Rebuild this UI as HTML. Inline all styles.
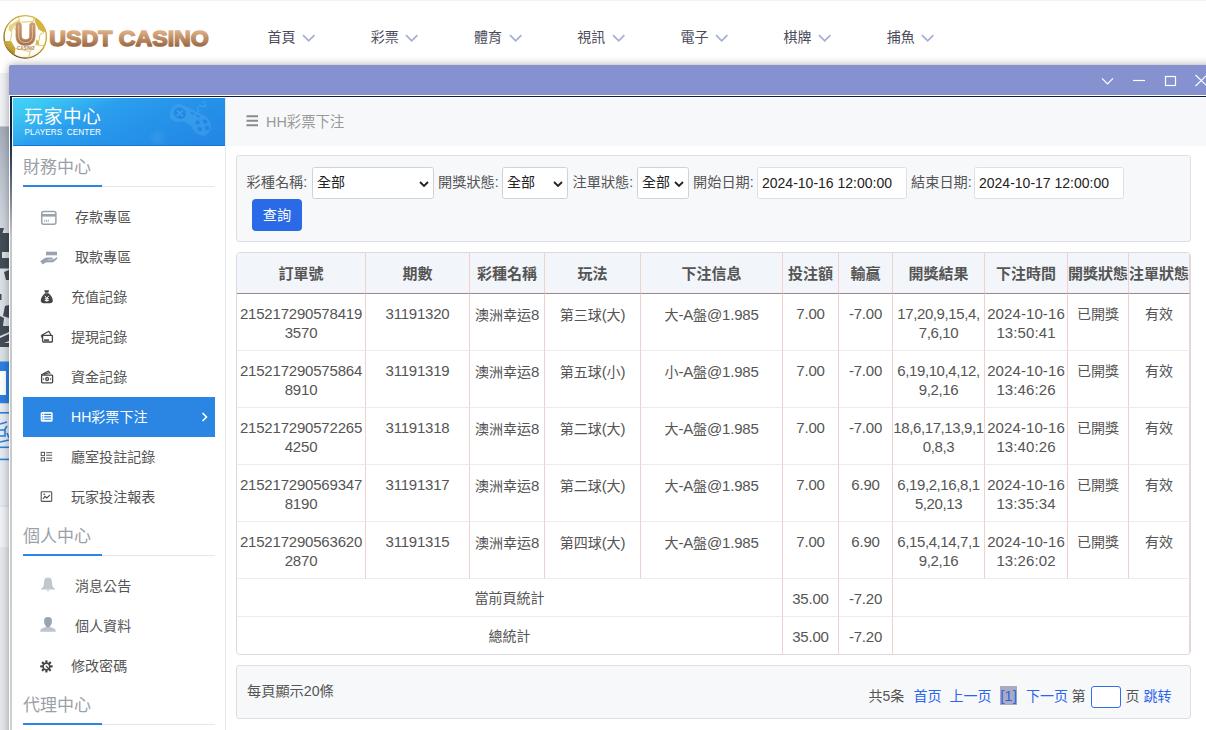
<!DOCTYPE html>
<html lang="zh-Hant">
<head>
<meta charset="utf-8">
<title>HH彩票下注</title>
<style>
*{box-sizing:border-box;margin:0;padding:0}
html,body{width:1206px;height:730px;overflow:hidden;background:#fff}
body{position:relative;font-family:"Liberation Sans","Noto Sans CJK TC",sans-serif;color:#555;font-size:14.6px}
.abs{position:absolute}
/* page behind */
#pagebg{left:0;top:73px;width:20px;height:657px;background:#e6e8ec;overflow:hidden}
#topline{left:0;top:0;width:1206px;height:1px;background:#f2f2f2}
#nav{left:0;top:2px;width:1206px;height:70px;background:#fff}
.mi{position:absolute;top:28px;margin-left:-.7px;font-size:14px;color:#4b4b5c;white-space:nowrap;line-height:18px}
.mi svg{position:absolute;left:34.500px;top:6px}
#logotxt{left:49px;top:22px;font-family:"Liberation Sans",sans-serif;font-weight:bold;font-size:24.2px;line-height:30px;white-space:nowrap;background:linear-gradient(#dcab80 20%,#9a6a44 85%);-webkit-background-clip:text;background-clip:text;color:transparent;-webkit-text-stroke:1.1px transparent;letter-spacing:-.4px;transform-origin:0 0}
/* modal */
#modal{left:9px;top:65px;width:1210px;height:680px;background:#8691d0;border-radius:2px 0 0 0;box-shadow:0 0 8px rgba(0,0,0,.35)}
#frame{left:9px;top:95px;width:1210px;height:650px;background:#fff}
#frame2{left:10px;top:96px;width:1210px;height:650px;background:#fff;border-top:1px solid #0b1c3e}
#lb{left:10px;top:96px;width:2px;height:640px;background:linear-gradient(#0b1c3e 0,#0b1c3e 40px,#777f8c 100px,#c4c6ca 140px,#cfd0d3 640px)}
#side{left:12px;top:97px;width:213px;height:633px;background:#fff}
#sidehead{left:13px;top:98px;width:212px;height:48px;border-bottom:1px solid #1274e0;background:linear-gradient(155deg,#42d2f6 0,#3dc8f4 12%,#2b9fee 36%,#2693e9 60%,#2285e4 100%);overflow:hidden}
#sidehead .t1{position:absolute;left:11.300px;top:8px;font-size:18.600px;letter-spacing:.75px;line-height:22px;color:#fff;white-space:nowrap}
#sidehead .t2{position:absolute;left:11.500px;top:30px;font-size:8.2px;line-height:10px;color:#fff;white-space:nowrap;letter-spacing:.1px;word-spacing:2px}
#vline{left:225px;top:97px;width:1px;height:633px;background:#e6e9ee}
.sec{position:absolute;left:23px;width:192px;height:31px;border-bottom:1px solid #e3e6ea;font-size:17px;line-height:23px;color:#9b9fa8;white-space:nowrap}
.sec i{position:absolute;left:0;bottom:-1px;width:79px;height:2px;background:#2a86e0}
.it{position:absolute;left:23px;width:192px;height:40px;font-size:14.050px;line-height:40px;color:#555;white-space:nowrap}
.it span{position:absolute;left:48px;top:0}
.it.w span{left:52px}
.it svg{position:absolute}
.it.act{background:#2a86e2;color:#fff}
/* main */
#crumb{left:226px;top:98px;width:980px;height:48px;background:#f7f8fa}
#crumb .t{position:absolute;left:40px;top:14px;font-size:14.4px;line-height:20px;color:#999;white-space:nowrap}
.box{position:absolute;left:236px;width:955px;background:#f7f8fa;border:1px solid #dcdfe3;border-radius:3px}
.lbl{position:absolute;top:173px;font-size:14.2px;line-height:18px;color:#555;white-space:nowrap}
.sel,.inp{position:absolute;top:167px;height:32px;background:#fff;border:1px solid #cfd3d8;border-radius:2.500px;font-size:14px;line-height:29px;color:#222;white-space:nowrap;padding-left:4px}
.inp{line-height:31px !important;border-color:#dde0e4 !important}
.sel svg{position:absolute;right:4px;top:12.500px}
#btn{left:252px;top:199px;width:50px;height:32px;background:#2a6ae6;border-radius:4px;color:#fff;font-size:14.2px;line-height:32px;text-align:center}
/* table */
#tblwrap{left:236px;top:252px;width:955px;height:403px;border:1px solid #d9dcdf;border-radius:4px;background:#fff;overflow:hidden}
table{border-collapse:separate;border-spacing:0;table-layout:fixed;width:953px;position:absolute;left:0;top:0}
th{height:41px;background:#f2f5f9;font-size:15px;font-weight:bold;color:#555;border-bottom:1px solid #958c8c;border-right:1px solid #f3d0d0;white-space:nowrap;overflow:visible;text-align:center;vertical-align:middle;padding:0 0 2px}
td{height:57px;border-bottom:1px solid #ececec;border-right:1px solid #f3d0d0;text-align:center;vertical-align:top;padding:10px 0 0;font-size:15px;letter-spacing:-.2px;line-height:19px;color:#555;white-space:nowrap;overflow:hidden}
tr.sum td{height:38px;padding:10px 0 0;vertical-align:top}

td.c{font-size:14px;letter-spacing:0;padding-top:10.500px}
td.c b{font-weight:normal;font-size:15px;letter-spacing:-.2px}
td.d{letter-spacing:.1px}
td.r{letter-spacing:-.4px}
.pr{top:687px;font-size:14px;line-height:18px;white-space:nowrap;color:#555}
.pr.b{color:#2d64ec}
#pager{left:236px;top:665px;width:955px;height:54px}
#pager .l{position:absolute;left:10px;top:16px;font-size:14.2px;line-height:18px;color:#555;white-space:nowrap}
#pager .r{position:absolute;top:20px;font-size:14.2px;line-height:18px;white-space:nowrap;color:#555}
#pager .r.b{color:#2a5fd8}
</style>
</head>
<body>
<div class="abs" id="pagebg"><svg style="position:absolute;left:0;top:0" width="20" height="657" viewBox="0 73 20 657">
<defs><linearGradient id="gs1" x1="0" y1="0" x2="0" y2="1"><stop offset="0" stop-color="#a3adb9"/><stop offset="0.5" stop-color="#bcc4ce"/><stop offset="1" stop-color="#d3d8df"/></linearGradient></defs>
<rect x="0" y="73" width="20" height="53.500" fill="#f0f1f5"/>
<rect x="0" y="126.500" width="20" height="104" fill="url(#gs1)"/>
<rect x="0" y="230" width="20" height="132" fill="#dbe0e6"/>
<g fill="#434d59">
<path d="M0 228 L4 228 L2.500 233 L9 233 L9 252 L2 252 L2 258 L9 258 L9 268.500 L0 268.500 Z"/>
<path d="M9 270 L9 280 L6 280 L4 272 Z"/>
<path d="M0 294 L1.500 294 L1.500 300 L0 300 Z"/>
<path d="M9 305 L9 318 L3 316 L5 306 Z"/>
<path d="M0 316 L4 318 L3 326 L9 326 L9 332 L0 336 Z"/>
<path d="M0 338 L9 334 L9 341 L4 343 L9 343 L9 347 L0 347 Z"/>
</g>
<rect x="0" y="361.500" width="20" height="42" fill="#2b80df"/>
<rect x="0" y="371" width="6" height="24" fill="#fff"/>
<rect x="0" y="403.500" width="20" height="103" fill="#e6eaf1"/>
<rect x="0" y="412" width="20" height="1.600" fill="#2b80df"/>
<g fill="none" stroke="#2b80df" stroke-width="1.600"><path d="M0 424 L7 422 M0 430 L5 430 L5 436 L0 436 M7 426 L4 431 M7 433 L9 438 M0 442 L9 440"/></g>
<rect x="0" y="446.500" width="20" height="1.600" fill="#2b80df"/>
<rect x="0" y="458.600" width="20" height="1.600" fill="#2b80df"/>
<rect x="0" y="506" width="20" height="41" fill="#eff1f5"/>
<rect x="0" y="505.500" width="20" height="1" fill="#d5d8de"/>
<rect x="0" y="547" width="20" height="183" fill="#e5e6ea"/>
</svg></div>
<div class="abs" id="nav"></div>
<div class="abs" id="topline"></div>
<svg class="abs" style="left:0;top:10px" width="60" height="54" viewBox="0 0 60 54">
<defs>
<radialGradient id="gball" cx="0.5" cy="0.45" r="0.6"><stop offset="0" stop-color="#ffffff"/><stop offset="0.78" stop-color="#fffef8"/><stop offset="1" stop-color="#f3e6b0"/></radialGradient>
<linearGradient id="gold" x1="0.8" y1="0" x2="0.2" y2="1"><stop offset="0" stop-color="#d6b94e"/><stop offset="0.5" stop-color="#bf9c32"/><stop offset="1" stop-color="#5a4106"/></linearGradient>
<linearGradient id="gu" x1="0" y1="0" x2="0" y2="1"><stop offset="0" stop-color="#d09e74"/><stop offset="1" stop-color="#a5724a"/></linearGradient>
<clipPath id="cb"><circle cx="25.200" cy="26.900" r="21.600"/></clipPath>
</defs>
<circle cx="25.200" cy="26.900" r="21.200" fill="url(#gball)" stroke="url(#gold)" stroke-width="1.300"/>
<g clip-path="url(#cb)">
<path d="M34.400 7.500 L41.500 10.500 L47 19 L44 22.500 L38.500 19.500 L34.800 11.200 Z" fill="#d4b544"/>
<path d="M9 15.500 L18.500 9.800 L21.500 12.200 L13.300 17 L11.800 22.500 L8.500 20 Z" fill="#e3cc6c" opacity=".85"/>
<path d="M3.500 31 L11.100 31 L15.500 38.500 L14.400 45.500 L8.100 42 Z" fill="url(#gold)"/>
<path d="M36.300 29.600 L38.800 31.100 L39.500 35.800 L35.500 35 Z" fill="#d9bd52"/>
<g fill="none" stroke="#dcc25e" stroke-width=".9">
<path d="M18.500 7 L19.500 10.500 M34.400 7.500 L33 11.500 M21.500 12.200 L33 11.500 M11.800 22.500 L10.500 31 M44 22.500 L40 24.500 L38.800 31.100 M39.500 35.800 L45 35 M15.500 38.500 L30 41.500 L35.500 35 M30 41.500 L28.500 48 M13.300 17 L16 20"/>
</g>
</g>
<path d="M18.700 12.600 Q15.900 12.600 15.900 15.400 L15.900 26 Q15.900 35.500 25.500 35.500 Q35.200 35.500 35.200 26 L35.200 15.400 Q35.200 12.600 32.400 12.600 Q29.600 12.600 29.600 15.400 L29.600 26 Q29.600 29.600 25.500 29.600 Q21.500 29.600 21.500 26 L21.500 15.400 Q21.500 12.600 18.700 12.600 Z" fill="url(#gu)" stroke="url(#gu)" stroke-width=".5"/>
<path d="M18.700 15.500 L18.700 26 Q18.700 32.600 25.500 32.600 Q32.400 32.600 32.400 26 L32.400 15.500" fill="none" stroke="#f1dfcd" stroke-width=".7" stroke-linecap="round" opacity=".9"/>
<text x="25.700" y="40.400" font-family="Liberation Sans, sans-serif" font-size="4.600" font-weight="bold" fill="#b3855c" text-anchor="middle" textLength="17.500" lengthAdjust="spacingAndGlyphs">CASINO</text>
</svg>
<svg class="abs" style="left:44px;top:22px" width="175" height="32" viewBox="0 0 175 32"><defs><linearGradient id="glt" x1="0" y1="0" x2="0" y2="1"><stop offset="0.22" stop-color="#ddae84"/><stop offset="0.8" stop-color="#9d6c46"/></linearGradient></defs><text x="5.300" y="23.700" font-family="Liberation Sans, sans-serif" font-weight="bold" font-size="22.400" fill="url(#glt)" stroke="url(#glt)" stroke-width="1.500" stroke-linejoin="round" textLength="159.500" lengthAdjust="spacingAndGlyphs">USDT CASINO</text></svg>
<div class="mi" style="left:268.3px">首頁<svg width="14" height="9" viewBox="0 0 14 9"><path d="M1 1.200 L6.700 6.900 L12.400 1.200" fill="none" stroke="#a3aed6" stroke-width="1.700"/></svg></div>
<div class="mi" style="left:371.5px">彩票<svg width="14" height="9" viewBox="0 0 14 9"><path d="M1 1.200 L6.700 6.900 L12.400 1.200" fill="none" stroke="#a3aed6" stroke-width="1.700"/></svg></div>
<div class="mi" style="left:474.7px">體育<svg width="14" height="9" viewBox="0 0 14 9"><path d="M1 1.200 L6.700 6.900 L12.400 1.200" fill="none" stroke="#a3aed6" stroke-width="1.700"/></svg></div>
<div class="mi" style="left:577.9px">視訊<svg width="14" height="9" viewBox="0 0 14 9"><path d="M1 1.200 L6.700 6.900 L12.400 1.200" fill="none" stroke="#a3aed6" stroke-width="1.700"/></svg></div>
<div class="mi" style="left:681.1px">電子<svg width="14" height="9" viewBox="0 0 14 9"><path d="M1 1.200 L6.700 6.900 L12.400 1.200" fill="none" stroke="#a3aed6" stroke-width="1.700"/></svg></div>
<div class="mi" style="left:784.3px">棋牌<svg width="14" height="9" viewBox="0 0 14 9"><path d="M1 1.200 L6.700 6.900 L12.400 1.200" fill="none" stroke="#a3aed6" stroke-width="1.700"/></svg></div>
<div class="mi" style="left:887.5px">捕魚<svg width="14" height="9" viewBox="0 0 14 9"><path d="M1 1.200 L6.700 6.900 L12.400 1.200" fill="none" stroke="#a3aed6" stroke-width="1.700"/></svg></div>

<div class="abs" id="modal"></div>
<svg class="abs" style="left:1096px;top:70px" width="110" height="22" viewBox="0 0 110 22">
<g fill="none" stroke="#fff" stroke-width="1.200">
<path d="M6 8.300 L11.500 13.800 L17 8.300"/>
<path d="M37 10.500 L49 10.500"/>
<rect x="69.500" y="6.500" width="10" height="9"/>
<path d="M99.500 5 L111 16 M99.500 16 L111 5"/>
</g></svg>
<div class="abs" id="frame"></div><div class="abs" id="frame2"></div><div class="abs" id="lb"></div>
<div class="abs" id="side"></div>
<div class="abs" id="sidehead"><svg style="position:absolute;left:0;top:0" width="212" height="48" viewBox="0 0 212 48">
<g transform="translate(176.500 21.500) rotate(26) scale(1 .9)" opacity=".6">
<path d="M-21 -2 Q-21 -11.500 -10 -11.500 L10 -11 Q23 -10.500 23 2 Q23 11 15 10.500 Q9 10 5 6 L-5 5 Q-9 9 -14 9 Q-21 9 -21 -2 Z" fill="#49a9ee" opacity=".75"/>
<circle cx="-11.500" cy="-1.500" r="6.200" fill="#2283e2"/>
<path d="M-11.500 -6 L-11.500 3 M-16 -1.500 L-7 -1.500" stroke="#49a3ec" stroke-width="2" transform="rotate(20 -11.500 -1.500)"/>
<rect x="-2" y="-8.500" width="4" height="1.800" fill="#2283e2"/><rect x="4" y="-8.500" width="4" height="1.800" fill="#2283e2"/>
<circle cx="8.500" cy="-1" r="2.300" fill="#2283e2"/><circle cx="15" cy="-5.500" r="2.300" fill="#2283e2"/>
<circle cx="13.500" cy="4.500" r="2.300" fill="#2283e2"/><circle cx="19.500" cy="0" r="2.300" fill="#2283e2"/>
</g>
<path d="M186 14 Q183 9 187 7.500 Q190 9.500 193 8 Q192 5 190 3" fill="none" stroke="#49a9ee" stroke-width="1" opacity=".8"/>
<circle cx="144.500" cy="40" r="8" fill="#3a9cec" opacity=".35"/><circle cx="144.500" cy="40" r="4.500" fill="#3a9cec" opacity=".4"/>
</svg><div class="t1">玩家中心</div><div class="t2">PLAYERS CENTER</div></div>
<div class="abs" id="vline"></div>
<div class="sec" style="top:156px">財務中心<i></i></div>
<div class="it w" style="top:197px"><svg style="left:17px;top:13px" width="18" height="16" viewBox="0 0 18 16"><rect x="1.700" y="1.500" width="14.200" height="12.700" rx="2" fill="none" stroke="#98a2ac" stroke-width="1.500"/><rect x="1.700" y="4" width="14.200" height="2.600" fill="#98a2ac"/><path d="M4.700 9.800v2M6.500 9.800v2M8.300 9.800v2" stroke="#98a2ac" stroke-width=".9"/></svg><span>存款專區</span></div>
<div class="it w" style="top:237px"><svg style="left:16px;top:13px" width="20" height="16" viewBox="0 0 20 16"><rect x="7" y="1.700" width="11" height="3.600" fill="#9aa3ad"/><path d="M1.200 11.200 L3.800 14.500 L6.600 12.500 L14 12.200 Q16 11.500 18.300 8.600 Q18.800 7 17.600 7.200 L15.200 9 L12.800 9.600 Q14.200 9 13.800 8 Q13.500 7.600 12 7.600 L7.600 7.600 Q6 7.800 4.800 8.800 Z" fill="#9aa3ad"/><path d="M8.500 9.900 L13.400 9.700" stroke="#fff" stroke-width=".6" opacity=".8"/></svg><span>取款專區</span></div>
<div class="it" style="top:277px"><svg style="left:16px;top:12px" width="16" height="16" viewBox="0 0 16 16"><path d="M5.200 1.200 L10.200 1.200 L9.200 3.800 L6.200 3.800 Z" fill="#444"/><path d="M6 4.300 L9.600 4.300 Q13.800 8 13.800 11.500 Q13.800 14.300 10.800 14.300 L4.800 14.300 Q1.800 14.300 1.800 11.500 Q1.800 8 6 4.300 Z" fill="#444"/><path d="M5.800 6.800 L7.800 9.400 L9.800 6.800 M7.800 9.400 L7.800 12.800 M5.800 9.800 L9.800 9.800 M5.800 11.400 L9.800 11.400" stroke="#fff" stroke-width="1" fill="none"/></svg><span>充值記錄</span></div>
<div class="it" style="top:317px"><svg style="left:16px;top:12px" width="16" height="16" viewBox="0 0 16 16"><path d="M2.200 6.500 L9.800 2.300 L12 6" fill="none" stroke="#444" stroke-width="1.200" stroke-linejoin="round"/><rect x="3.600" y="6.300" width="9.800" height="6.700" rx=".8" fill="#fff" stroke="#444" stroke-width="1.300"/><path d="M2.200 6.500 L3.600 9.500" stroke="#444" stroke-width="1.200"/><rect x="5" y="10.300" width="5" height="1.600" fill="#444"/></svg><span>提現記錄</span></div>
<div class="it" style="top:357px"><svg style="left:16px;top:12px" width="16" height="16" viewBox="0 0 16 16"><path d="M2 6 L9.500 2 L11.300 4.800 M5 5.600 L10.800 3.400" fill="none" stroke="#444" stroke-width="1.100" stroke-linejoin="round"/><rect x="2.600" y="6.200" width="11" height="7.600" rx=".8" fill="#fff" stroke="#444" stroke-width="1.300"/><ellipse cx="8.100" cy="10" rx="2" ry="2.300" fill="#444"/><path d="M8.100 8.800v2.400" stroke="#fff" stroke-width=".8"/><circle cx="4.600" cy="10" r=".7" fill="#444"/><circle cx="11.600" cy="10" r=".7" fill="#444"/></svg><span>資金記錄</span></div>
<div class="it act" style="top:397px"><svg style="left:17px;top:14px" width="14" height="12" viewBox="0 0 14 12"><rect x=".7" y="1" width="12" height="9.700" rx="1.600" fill="#fff"/><path d="M4.200 3.400h7M4.200 5.850h7M4.200 8.300h7" stroke="#2a86e2" stroke-width="1.100"/><path d="M2.200 3.400h1M2.200 5.850h1M2.200 8.300h1" stroke="#2a86e2" stroke-width="1.100"/></svg><span>HH彩票下注</span><svg style="left:178px;top:14px" width="8" height="12" viewBox="0 0 8 12"><path d="M1.500 2 L5.500 6 L1.500 10" fill="none" stroke="#fff" stroke-width="1.600"/></svg></div>
<div class="it" style="top:437px"><svg style="left:17px;top:14px" width="14" height="12" viewBox="0 0 14 12"><rect x="1.200" y="1.300" width="3.300" height="3.300" fill="none" stroke="#555" stroke-width="1"/><rect x="1.200" y="6.700" width="3.300" height="3.300" fill="none" stroke="#555" stroke-width="1"/><path d="M6.200 1.700h6M6.200 4.200h6M6.200 7.100h6M6.200 9.600h6" stroke="#555" stroke-width="1"/></svg><span>廳室投註記錄</span></div>
<div class="it" style="top:477px"><svg style="left:17px;top:14px" width="14" height="12" viewBox="0 0 14 12"><rect x="1.200" y=".8" width="10.500" height="9.600" rx=".6" fill="none" stroke="#555" stroke-width="1.100"/><path d="M3 8 L5 5.400 L6.800 7 L9.800 4.200" fill="none" stroke="#444" stroke-width="1.100"/><circle cx="4.200" cy="3.300" r=".8" fill="#444"/></svg><span>玩家投注報表</span></div>
<div class="sec" style="top:525px">個人中心<i></i></div>
<div class="it w" style="top:566px"><svg style="left:16px;top:10px" width="18" height="18" viewBox="0 0 18 18"><path d="M9 1.600 Q12.800 1.600 13 6 L13.300 9.500 Q13.600 11.500 16 12.800 L16 13.400 L2 13.400 L2 12.800 Q4.400 11.500 4.700 9.500 L5 6 Q5.200 1.600 9 1.600 Z" fill="#c1c7cd"/><path d="M7.400 14.300 L10.600 14.300 L9 15.800 Z" fill="#c1c7cd"/></svg><span>消息公告</span></div>
<div class="it w" style="top:606px"><svg style="left:16px;top:10px" width="18" height="18" viewBox="0 0 18 18"><path d="M1.200 15.800 Q1.200 12.800 4 12 L7.500 10.800 L10.500 10.800 L14 12 Q16.800 12.800 16.800 15.800 Z" fill="#bdc4cb"/><path d="M9 1 Q13 1 13 5 Q13 8 11.200 10 Q10.500 11.300 9 11.300 Q7.500 11.300 6.800 10 Q5 8 5 5 Q5 1 9 1 Z" fill="#9aa4ae"/></svg><span>個人資料</span></div>
<div class="it" style="top:646px"><svg style="left:16px;top:12px" width="16" height="16" viewBox="0 0 16 16"><g transform="translate(7.400 8.400)"><g fill="#444"><rect x="-1.100" y="-6.200" width="2.200" height="3" rx=".5"/><rect x="-1.100" y="-6.200" width="2.200" height="3" rx=".5" transform="rotate(45)"/><rect x="-1.100" y="-6.200" width="2.200" height="3" rx=".5" transform="rotate(90)"/><rect x="-1.100" y="-6.200" width="2.200" height="3" rx=".5" transform="rotate(135)"/><rect x="-1.100" y="-6.200" width="2.200" height="3" rx=".5" transform="rotate(180)"/><rect x="-1.100" y="-6.200" width="2.200" height="3" rx=".5" transform="rotate(225)"/><rect x="-1.100" y="-6.200" width="2.200" height="3" rx=".5" transform="rotate(270)"/><rect x="-1.100" y="-6.200" width="2.200" height="3" rx=".5" transform="rotate(315)"/></g><circle r="4" fill="#444"/><circle r="2.500" fill="#fff"/><path d="M-.5 -.5 L2.600 2.600" stroke="#444" stroke-width="1.200"/></g></svg><span>修改密碼</span></div>
<div class="sec" style="top:694px">代理中心<i></i></div>

<div class="abs" id="crumb"><svg style="position:absolute;left:20px;top:17px" width="13" height="12" viewBox="0 0 13 12"><path d="M.5 1.200h11.500M.5 5.700h11.500M.5 10.200h11.500" stroke="#8a8a8a" stroke-width="2"/></svg><div class="t">HH彩票下注</div></div>
<div class="box" style="top:155px;height:87px"></div>
<div class="lbl" style="left:246.500px">彩種名稱:</div>
<div class="sel" style="left:312px;width:122px">全部<svg width="10" height="6" viewBox="0 0 10 6"><path d="M1 1 L5 5 L9 1" fill="none" stroke="#222" stroke-width="1.800"/></svg></div>
<div class="lbl" style="left:438px">開獎狀態:</div>
<div class="sel" style="left:502px;width:66px">全部<svg width="10" height="6" viewBox="0 0 10 6"><path d="M1 1 L5 5 L9 1" fill="none" stroke="#222" stroke-width="1.800"/></svg></div>
<div class="lbl" style="left:572.500px">注單狀態:</div>
<div class="sel" style="left:637px;width:52px">全部<svg width="10" height="6" viewBox="0 0 10 6"><path d="M1 1 L5 5 L9 1" fill="none" stroke="#222" stroke-width="1.800"/></svg></div>
<div class="lbl" style="left:693px">開始日期:</div>
<div class="inp" style="left:757px;width:150px">2024-10-16 12:00:00</div>
<div class="lbl" style="left:911px">結束日期:</div>
<div class="inp" style="left:974px;width:150px">2024-10-17 12:00:00</div>
<div class="abs" id="btn">查詢</div>

<div class="abs" id="tblwrap"><table><colgroup><col style="width:129px"><col style="width:104px"><col style="width:75px"><col style="width:96px"><col style="width:142px"><col style="width:56px"><col style="width:54px"><col style="width:92px"><col style="width:83px"><col style="width:61px"><col style="width:61px"></colgroup>
<tr><th>訂單號</th><th>期數</th><th>彩種名稱</th><th>玩法</th><th>下注信息</th><th>投注額</th><th>輸贏</th><th>開獎結果</th><th>下注時間</th><th>開獎狀態</th><th>注單狀態</th></tr>
<tr><td class="n">215217290578419<br>3570</td><td class="n">31191320</td><td class="c">澳洲幸运<b>8</b></td><td class="c">第三球<b>(</b>大<b>)</b></td><td class="c">大<b>-A</b>盤<b>@1.985</b></td><td class="n">7.00</td><td class="n">-7.00</td><td class="n r">17,20,9,15,4,<br>7,6,10</td><td class="n d">2024-10-16<br>13:50:41</td><td class="c">已開獎</td><td class="c">有效</td></tr>
<tr><td class="n">215217290575864<br>8910</td><td class="n">31191319</td><td class="c">澳洲幸运<b>8</b></td><td class="c">第五球<b>(</b>小<b>)</b></td><td class="c">小<b>-A</b>盤<b>@1.985</b></td><td class="n">7.00</td><td class="n">-7.00</td><td class="n r">6,19,10,4,12,<br>9,2,16</td><td class="n d">2024-10-16<br>13:46:26</td><td class="c">已開獎</td><td class="c">有效</td></tr>
<tr><td class="n">215217290572265<br>4250</td><td class="n">31191318</td><td class="c">澳洲幸运<b>8</b></td><td class="c">第二球<b>(</b>大<b>)</b></td><td class="c">大<b>-A</b>盤<b>@1.985</b></td><td class="n">7.00</td><td class="n">-7.00</td><td class="n r">18,6,17,13,9,1<br>0,8,3</td><td class="n d">2024-10-16<br>13:40:26</td><td class="c">已開獎</td><td class="c">有效</td></tr>
<tr><td class="n">215217290569347<br>8190</td><td class="n">31191317</td><td class="c">澳洲幸运<b>8</b></td><td class="c">第二球<b>(</b>大<b>)</b></td><td class="c">大<b>-A</b>盤<b>@1.985</b></td><td class="n">7.00</td><td class="n">6.90</td><td class="n r">6,19,2,16,8,1<br>5,20,13</td><td class="n d">2024-10-16<br>13:35:34</td><td class="c">已開獎</td><td class="c">有效</td></tr>
<tr><td class="n">215217290563620<br>2870</td><td class="n">31191315</td><td class="c">澳洲幸运<b>8</b></td><td class="c">第四球<b>(</b>大<b>)</b></td><td class="c">大<b>-A</b>盤<b>@1.985</b></td><td class="n">7.00</td><td class="n">6.90</td><td class="n r">6,15,4,14,7,1<br>9,2,16</td><td class="n d">2024-10-16<br>13:26:02</td><td class="c">已開獎</td><td class="c">有效</td></tr>
<tr class="sum"><td colspan="5" class="c">當前頁統計</td><td class="n">35.00</td><td class="n">-7.20</td><td colspan="4"></td></tr>
<tr class="sum"><td colspan="5" class="c">總統計</td><td class="n">35.00</td><td class="n">-7.20</td><td colspan="4"></td></tr>
</table></div>

<div class="box" id="pager" style="top:665px;height:54px"><div class="l">每頁顯示20條</div></div>
<div class="abs pr" style="left:868.5px">共5条</div>
<div class="abs pr b" style="left:913.5px">首页</div>
<div class="abs pr b" style="left:949.5px">上一页</div>
<div class="abs pr b" style="left:1000px;top:686px;width:17px;height:19px;line-height:19px;text-align:center;font-size:15px;background:#ababc0">[1]</div>
<div class="abs pr b" style="left:1026px">下一页</div>
<div class="abs pr" style="left:1071.5px">第</div>
<div class="abs" style="left:1091px;top:686px;width:30px;height:22px;border:1px solid #2f6fe8;border-radius:3px;background:#fff"></div>
<div class="abs pr" style="left:1125.5px">页</div>
<div class="abs pr b" style="left:1143.5px">跳转</div>

</body>
</html>
